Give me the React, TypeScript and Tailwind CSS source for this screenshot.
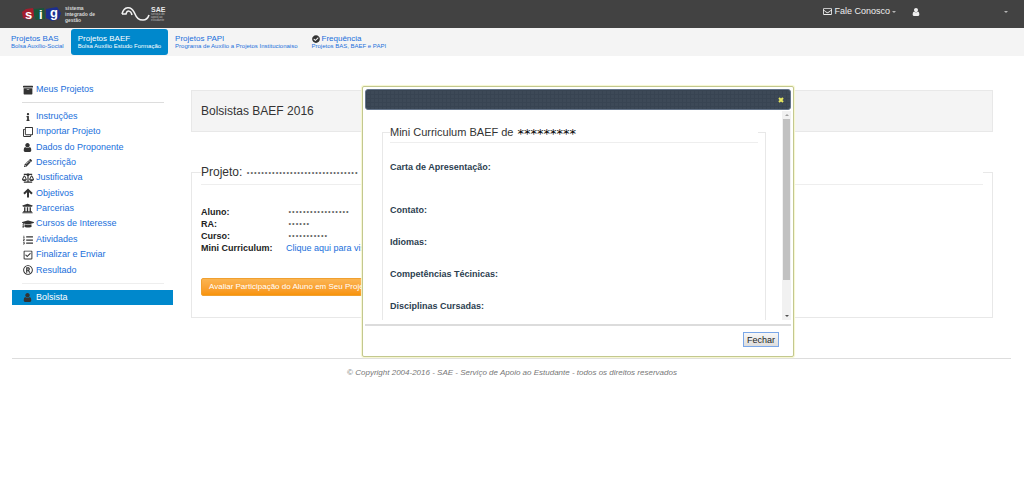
import type { ReactNode } from "react";
import {
  FaArchive,
  FaBalanceScale,
  FaCheckCircle,
  FaGraduationCap,
  FaInfo,
  FaListOl,
  FaPencilAlt,
  FaRegCheckSquare,
  FaRegClone,
  FaRegEnvelope,
  FaRegRegistered,
  FaUniversity,
} from "react-icons/fa";

type Icon = (props: { size?: number; className?: string }) => ReactNode;

const UserIcon: Icon = ({ size = 10, className }) => (
  <svg viewBox="128 128 1536 1536" width={size} height={size} fill="currentColor" className={className} aria-hidden="true">
    <path d="M1536 1399q0 109-62.5 187t-150.5 78h-854q-88 0-150.5-78t-62.5-187q0-85 8.5-160.5t31.5-152 58.5-131 94-89 134.5-34.5q131 128 313 128t313-128q76 0 134.5 34.5t94 89 58.5 131 31.5 152 8.5 160.5zm-256-887q0 159-112.5 271.5t-271.5 112.5-271.5-112.5-112.5-271.5 112.5-271.5 271.5-112.5 271.5 112.5 112.5 271.5z" />
  </svg>
);

const ArrowUpIcon: Icon = ({ size = 10, className }) => (
  <svg
    viewBox="0 0 10 10"
    width={size}
    height={size}
    fill="none"
    stroke="currentColor"
    strokeWidth="2"
    className={className}
    aria-hidden="true"
  >
    <path d="M1 5.8L5 1.8L9 5.8M5 2.5V9.5" />
  </svg>
);

const tabs: { title: string; sub: string; active?: boolean; icon?: boolean }[] = [
  { title: "Projetos BAS", sub: "Bolsa Auxílio-Social" },
  { title: "Projetos BAEF", sub: "Bolsa Auxílio Estudo Formação", active: true },
  { title: "Projetos PAPI", sub: "Programa de Auxílio a Projetos Institucionaiso" },
  { title: "Frequência", sub: "Projetos BAS, BAEF e PAPI", icon: true },
];

const menu: { label: string; icon: Icon; size?: number }[] = [
  { label: "Instruções", icon: FaInfo, size: 8 },
  { label: "Importar Projeto", icon: FaRegClone },
  { label: "Dados do Proponente", icon: UserIcon, size: 9 },
  { label: "Descrição", icon: FaPencilAlt, size: 8 },
  { label: "Justificativa", icon: FaBalanceScale, size: 12 },
  { label: "Objetivos", icon: ArrowUpIcon },
  { label: "Parcerias", icon: FaUniversity, size: 11 },
  { label: "Cursos de Interesse", icon: FaGraduationCap, size: 12 },
  { label: "Atividades", icon: FaListOl },
  { label: "Finalizar e Enviar", icon: FaRegCheckSquare },
  { label: "Resultado", icon: FaRegRegistered },
];

const sections = ["Contato:", "Idiomas:", "Competências Técinicas:", "Disciplinas Cursadas:"];

function Caret() {
  return <span className="mt-px h-0 w-0 border-x-2 border-t-2 border-x-transparent border-t-[#b5b5b5]" />;
}

function SigLogo() {
  return (
    <a href="#sig" className="flex items-center gap-1">
      <svg viewBox="0 0 40 18" className="h-[18px] w-10 overflow-visible" aria-hidden="true">
        <path d="M1 7 L5 4 L12 3 L13 11 L9 15 L2 13Z" fill="#a51d2d" />
        <path d="M13 4 L23 3 L24 14 L15 15 L13 10Z" fill="#17573a" />
        <path d="M25 4 L36 2 L40 8 L38 14 L31 16 L25 13Z" fill="#1c2f8f" />
        <g fill="#fff" fontFamily="Liberation Sans, sans-serif" fontWeight="bold" fontSize="13">
          <text x="4" y="14">s</text>
          <text x="18" y="14">i</text>
          <text x="29" y="12">g</text>
        </g>
      </svg>
      <span className="text-[5px] leading-[6px] font-bold text-[#d8d8d8]">
        sistema
        <br />
        integrado de
        <br />
        gestão
      </span>
    </a>
  );
}

function SaeLogo() {
  return (
    <a href="#sae" className="flex items-center gap-px">
      <svg viewBox="0 0 29 16" className="h-4 w-[29px]" fill="none" stroke="#f2f2f2" aria-hidden="true">
        <path d="M1 8 C3 0 10 0 13 6 C16 13 18 14 22 14 C25 14 27 12 28 9" strokeWidth="1.6" />
        <path d="M1 8H5 C6 4 10 4 11 9" strokeWidth="1.5" />
      </svg>
      <span className="flex flex-col text-[#e8e8e8]">
        <b className="text-[7px] leading-[7px]">SAE</b>
        <span className="text-[3px] leading-[3px] text-[#bdbdbd]">
          serviço de
          <br />
          apoio ao
          <br />
          estudante
        </span>
      </span>
    </a>
  );
}

function MenuLink({
  icon: Glyph,
  size = 10,
  children,
  active,
}: {
  icon: Icon;
  size?: number;
  children: ReactNode;
  active?: boolean;
}) {
  return (
    <a
      href="#menu"
      className={
        active
          ? "flex h-[15px] items-center gap-[3px] bg-[#0088cc] pl-[10px] text-white"
          : "flex h-[15px] items-center gap-[3px] pl-[10px] text-[#1a6fdb]"
      }
    >
      <span className="flex w-[11px] justify-center text-[#333333]">
        <Glyph size={size} className="shrink-0" />
      </span>
      {children}
    </a>
  );
}

function Row({ label, children }: { label: string; children: ReactNode }) {
  return (
    <div className="flex h-3 items-center">
      <dt className="w-[85px] font-bold whitespace-nowrap text-[#222222]">{label}</dt>
      <dd>{children}</dd>
    </div>
  );
}

function Stars({ count }: { count: number }) {
  return (
    <span className="ml-[2px] pt-[3px] font-['Liberation_Mono',monospace] text-[6px] leading-3 font-bold text-[#333333]">
      {"*".repeat(count)}
    </span>
  );
}

function Dialog() {
  return (
    <section
      role="dialog"
      aria-label="Mini Curriculum"
      className="absolute top-[86px] left-[362px] w-[432px] rounded-[2px] border border-[#c3c88e] bg-white p-[2px] shadow-[0_0_1px_1px_#f7f7d0]"
    >
      <header className="flex h-[21px] items-center justify-end rounded-[3px] border border-[#65758a] bg-[#3d4957] bg-[linear-gradient(90deg,#384452_1px,transparent_1px),linear-gradient(#384452_1px,transparent_1px)] bg-[size:4px_4px] pr-[6px]">
        <button aria-label="Fechar janela" className="text-[#e8e860]">
          <svg viewBox="0 0 6 6" className="h-[6px] w-[6px]" stroke="currentColor" strokeWidth="2" aria-hidden="true">
            <path d="M1 1L5 5M5 1L1 5" />
          </svg>
        </button>
      </header>
      <div className="flex h-[210px]">
        <div className="flex-1 overflow-hidden pt-3 pr-4 pl-[17px]">
          <fieldset className="h-[260px] border border-[#e8e8e8] px-[7px]">
            <legend className="flex w-full items-center border-b border-[#eeeeee] text-[11px] leading-5 text-[#333333]">
              Mini Curriculum BAEF de
              <span className="pt-1 pl-1 font-['DejaVu_Sans',sans-serif] text-[13px] leading-4 font-normal text-black">
                *********
              </span>
            </legend>
            <div className="flex flex-col gap-5 pt-[18px] text-[9px] leading-3 font-bold text-[#2c3e50]">
              <h3 className="pb-[11px]">Carta de Apresentação:</h3>
              {sections.map((s) => (
                <h3 key={s}>{s}</h3>
              ))}
            </div>
          </fieldset>
        </div>
        <div className="mt-px flex w-[9px] flex-col items-center bg-[#f1f1f1]">
          <span className="my-[3px] border-x-2 border-b-2 border-x-transparent border-b-[#a0a0a0]" />
          <span className="h-[161px] w-[7px] bg-[#c1c1c1]" />
          <span className="mt-auto mb-[3px] border-x-2 border-t-2 border-x-transparent border-t-[#505050]" />
        </div>
      </div>
      <footer className="mt-1 flex justify-end border-t-2 border-[#dcdcdc] pt-[6px] pr-3 pb-[7px]">
        <button className="h-[15px] border border-[#7aa7e8] bg-linear-to-b from-[#f7f7f7] to-[#dddddd] px-[3px] text-[9px] leading-3 text-[#222222]">
          Fechar
        </button>
      </footer>
    </section>
  );
}

export default function App() {
  return (
    <div className="relative min-h-screen bg-white font-['Liberation_Sans',Arial,sans-serif] text-[9px] text-[#333333]">
      <header className="flex h-7 items-center bg-[#424242] pr-4 pl-[21px] text-[#eeeeee]">
        <SigLogo />
        <span className="w-[26px]" />
        <SaeLogo />
        <nav className="ml-auto flex items-center pb-[5px]">
          <a href="#contato" className="flex items-center gap-[2px]">
            <FaRegEnvelope size={9} />
            Fale Conosco
            <Caret />
          </a>
          <a href="#perfil" aria-label="Perfil" className="flex w-[112px] items-center justify-between pl-4">
            <UserIcon size={8} />
            <Caret />
          </a>
        </nav>
      </header>

      <nav className="flex h-7 items-center bg-[#f4f4f4] pl-1">
        {tabs.map((t) => (
          <a
            key={t.title}
            href="#projetos"
            className={
              t.active
                ? "flex h-[26px] flex-col justify-center rounded-[3px] bg-[#0088cc] px-[7px] whitespace-nowrap text-white"
                : "flex h-[26px] flex-col justify-center px-[7px] whitespace-nowrap text-[#1a6fdb]"
            }
          >
            <span className="flex items-center gap-[2px] text-[8px] leading-[9px]">
              {t.icon && <FaCheckCircle size={8} className="text-[#333333]" />}
              {t.title}
            </span>
            <span className="text-[6px] leading-[7px]">{t.sub}</span>
          </a>
        ))}
      </nav>

      <div className="mr-[13px] ml-3 flex items-start gap-[18px] border-b border-[#dddddd] pb-10">
        <nav className="flex w-[161px] shrink-0 flex-col pt-[26px]">
          <MenuLink icon={FaArchive}>Meus Projetos</MenuLink>
          <hr className="mt-[5px] mr-[9px] mb-[6px] ml-[10px] border-[#dddddd]" />
          <div className="flex h-[169px] flex-col justify-between">
            {menu.map((m) => (
              <MenuLink key={m.label} icon={m.icon} size={m.size}>
                {m.label}
              </MenuLink>
            ))}
          </div>
          <hr className="mt-[5px] mr-[9px] mb-[6px] ml-[10px] border-[#eeeeee]" />
          <MenuLink icon={UserIcon} size={9} active>
            Bolsista
          </MenuLink>
        </nav>

        <main className="mr-[18px] flex-1 pt-[34px]">
          <h1 className="flex h-[42px] items-center border border-[#e8e8e8] bg-[#f4f4f4] pl-[9px] text-[12px]">
            Bolsistas BAEF 2016
          </h1>
          <fieldset className="mt-7 border border-[#e8e8e8] px-[9px] pb-[21px]">
            <legend className="flex w-full items-center border-b border-[#eeeeee] text-[12px] leading-6">
              Projeto:
              <span className="flex pt-[3px] pl-[2px]">
                <Stars count={31} />
              </span>
            </legend>
            <dl className="pt-[22px]">
              <Row label="Aluno:">
                <Stars count={17} />
              </Row>
              <Row label="RA:">
                <Stars count={6} />
              </Row>
              <Row label="Curso:">
                <Stars count={11} />
              </Row>
              <Row label="Mini Curriculum:">
                <a href="#curriculum" className="text-[#1a6fdb]">
                  Clique aqui para visualizar
                </a>
              </Row>
            </dl>
            <button className="mt-[23px] h-[18px] rounded-[2px] border border-[#f0a030] bg-linear-to-b from-[#fbb450] to-[#f89406] px-[7px] text-[8px] whitespace-nowrap text-white">
              Avaliar Participação do Aluno em Seu Projeto
            </button>
          </fieldset>
        </main>
      </div>

      <footer className="pt-[9px] text-center text-[8px] leading-[10px] text-[#777777] italic">
        © Copyright 2004-2016 - SAE - Serviço de Apoio ao Estudante - todos os direitos reservados
      </footer>

      <Dialog />
    </div>
  );
}
